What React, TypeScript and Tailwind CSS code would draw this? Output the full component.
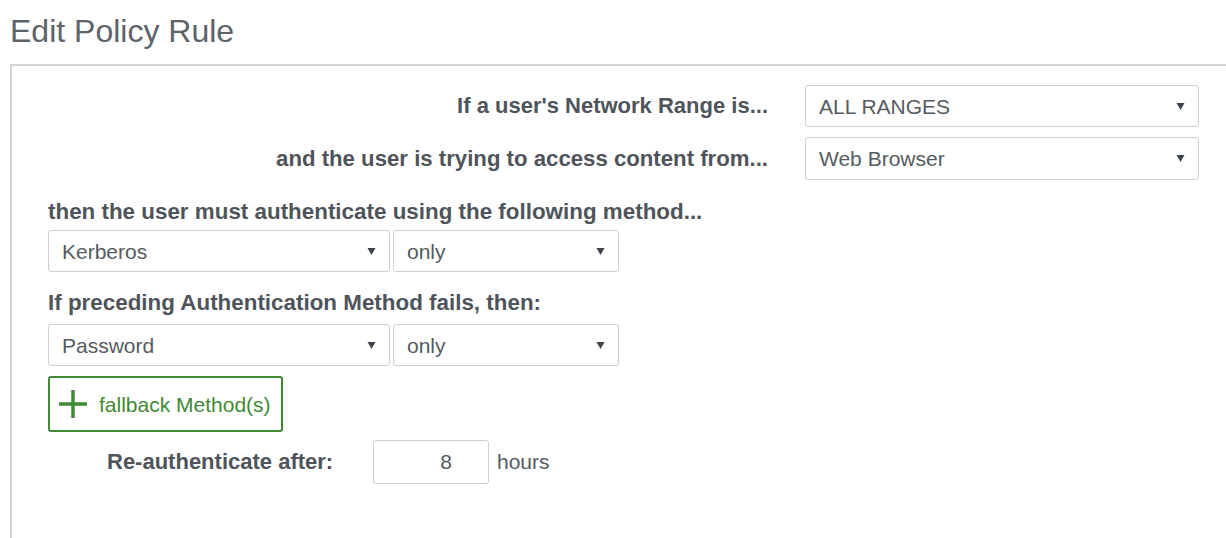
import React from "react";

const font = { fontFamily: '"Liberation Sans", Arial, sans-serif' };

function Caret() {
  return (
    <svg width="9" height="7" viewBox="0 0 9 7" className="shrink-0">
      <path d="M0.5 0 H8.5 L4.5 7 Z" fill="#3d434a" />
    </svg>
  );
}

function SelectBox({ value, className }: { value: string; className: string }) {
  return (
    <div
      className={`flex items-center justify-between rounded-[3px] border border-[#cfcfcf] bg-white pl-[13px] pr-[13px] text-[21px] leading-none text-[#555b61] ${className}`}
    >
      <span>{value}</span>
      <Caret />
    </div>
  );
}

export default function App() {
  return (
    <div className="h-[538px] w-[1226px] overflow-hidden bg-white" style={font}>
      <h1 className="pl-[10px] pt-[13px] text-[32px] font-normal leading-[37px] text-[#5c6369]">
        Edit Policy Rule
      </h1>

      <div className="ml-[10px] mt-[14px] h-[480px] border-l-2 border-t-2 border-[#d4d4d4] pl-[36px] pt-[19px]">
        {/* network range / client type */}
        <div className="flex flex-col gap-[10px]">
          <div className="flex items-center">
            <div className="w-[720px] text-right text-[22px] font-bold leading-[24px] text-[#4e545a]">
              If a user's Network Range is...
            </div>
            <SelectBox value="ALL RANGES" className="ml-[37px] h-[42px] w-[394px]" />
          </div>
          <div className="flex items-center">
            <div className="w-[720px] text-right text-[22.2px] font-bold leading-[24px] text-[#4e545a]">
              and the user is trying to access content from...
            </div>
            <SelectBox value="Web Browser" className="ml-[37px] h-[43px] w-[394px]" />
          </div>
        </div>

        {/* primary method */}
        <div className="mt-[20px] text-[22.4px] font-bold leading-[24px] text-[#4e545a]">
          then the user must authenticate using the following method...
        </div>
        <div className="mt-[6px] flex gap-[3px]">
          <SelectBox value="Kerberos" className="h-[42px] w-[342px]" />
          <SelectBox value="only" className="h-[42px] w-[226px]" />
        </div>

        {/* fallback method */}
        <div className="mt-[19px] text-[22.4px] font-bold leading-[24px] text-[#4e545a]">
          If preceding Authentication Method fails, then:
        </div>
        <div className="mt-[9px] flex gap-[3px]">
          <SelectBox value="Password" className="h-[42px] w-[342px]" />
          <SelectBox value="only" className="h-[42px] w-[226px]" />
        </div>

        <button className="mt-[10px] flex h-[56px] w-[235px] items-center gap-[11px] rounded-[3px] border-2 border-[#3f8a32] bg-white pl-[8px] text-[21px] leading-none text-[#3f8a32]">
          <svg width="30" height="30" viewBox="0 0 30 30" className="shrink-0">
            <path d="M15 1 V29 M1 15 H29" stroke="#3f8a32" strokeWidth="3.5" />
          </svg>
          <span>fallback Method(s)</span>
        </button>

        {/* re-authentication */}
        <div className="mt-[8px] flex items-center">
          <div className="ml-[59px] w-[226px] whitespace-nowrap text-[22px] font-bold leading-[24px] text-[#4e545a]">
            Re-authenticate after:
          </div>
          <div className="ml-[40px] flex h-[44px] w-[116px] items-center justify-end rounded-[3px] border border-[#cfcfcf] pr-[36px] text-[21px] text-[#555b61]">
            8
          </div>
          <div className="ml-[8px] text-[21px] text-[#555b61]">hours</div>
        </div>
      </div>
    </div>
  );
}
